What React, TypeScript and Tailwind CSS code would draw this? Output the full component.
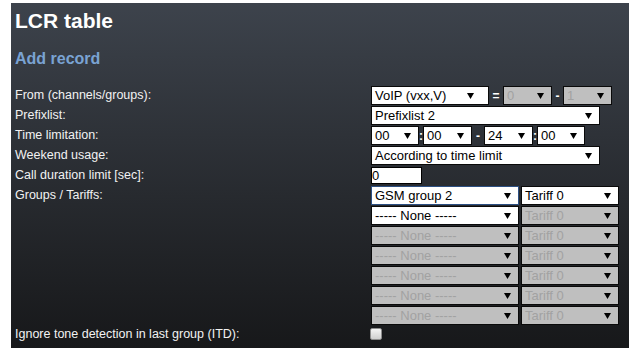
import React from "react";

const Arrow = () => (
  <svg width="7" height="6" viewBox="0 0 7 6" className="shrink-0">
    <polygon points="0,0 7,0 3.5,6" fill="#000" />
  </svg>
);

type SelProps = {
  text: string;
  w: string;
  disabled?: boolean;
  focus?: boolean;
  pr?: string;
};

const Sel = ({ text, w, disabled, focus, pr }: SelProps) => (
  <div
    className={`${w} h-[19px] shrink-0 flex items-center justify-between pl-[3px] ${pr ?? "pr-[7px]"} border ${
      focus ? "border-[#2c4f82]" : "border-[#0a0a0a]"
    } ${disabled ? "bg-[#bfbfbf] text-[#a2a2a2]" : "bg-white text-black"} text-[13px] leading-none whitespace-nowrap overflow-hidden`}
  >
    <span>{text}</span>
    <Arrow />
  </div>
);

const Sep = ({ ch, w }: { ch: string; w: string }) => (
  <div className={`${w} h-[19px] shrink-0 flex items-center justify-center text-white text-[12px] font-bold leading-none`}>
    {ch}
  </div>
);

const Row = ({ label, children, h = "h-[20px]" }: { label?: string; children?: React.ReactNode; h?: string }) => (
  <div className={`flex ${h}`}>
    <div className="w-[356px] shrink-0 h-[19px] flex items-center text-[12.5px] text-[#f2f2f2] leading-none whitespace-nowrap">
      {label}
    </div>
    <div className="flex items-start">{children}</div>
  </div>
);

export default function App() {
  const groupRows = Array.from({ length: 5 });
  return (
    <div className="w-[637px] h-[348px] bg-white pt-[3px] pl-[11px]" style={{ fontFamily: '"Liberation Sans", Arial, sans-serif' }}>
      <div className="w-[618px] h-[345px] bg-gradient-to-b from-[#3d434c] to-[#17181a] pl-[4px] pt-[6px]">
        <h1 className="text-[21px] font-bold text-white leading-[24px]">LCR table</h1>
        <h2 className="mt-[16px] text-[16px] font-bold text-[#7aa3d3] leading-[20px]">Add record</h2>
        <div className="mt-[17px] flex flex-col">
          <Row label="From (channels/groups):">
            <Sel text="VoIP (vxx,V)" w="w-[118px]" pr="pr-[14px]" />
            <Sep ch="=" w="w-[14px]" />
            <Sel text="0" w="w-[49px]" disabled />
            <Sep ch="-" w="w-[11px]" />
            <Sel text="1" w="w-[49px]" disabled />
          </Row>
          <Row label="Prefixlist:">
            <Sel text="Prefixlist 2" w="w-[229px]" />
          </Row>
          <Row label="Time limitation:">
            <Sel text="00" w="w-[48px]" />
            <Sep ch=":" w="w-[4px]" />
            <Sel text="00" w="w-[49px]" />
            <Sep ch="-" w="w-[12px]" />
            <Sel text="24" w="w-[49px]" />
            <Sep ch=":" w="w-[4px]" />
            <Sel text="00" w="w-[48px]" />
          </Row>
          <Row label="Weekend usage:">
            <Sel text="According to time limit" w="w-[229px]" />
          </Row>
          <Row label="Call duration limit [sec]:">
            <div className="mt-[1px] w-[51px] h-[17px] bg-white border border-black text-[13px] leading-none flex items-center pl-[0px] text-black">
              0
            </div>
          </Row>
          <Row label="Groups / Tariffs:">
            <Sel text="GSM group 2" w="w-[148px]" focus />
            <div className="w-[2px]" />
            <Sel text="Tariff 0" w="w-[98px]" />
          </Row>
          <Row>
            <Sel text="----- None -----" w="w-[148px]" />
            <div className="w-[2px]" />
            <Sel text="Tariff 0" w="w-[98px]" disabled />
          </Row>
          {groupRows.map((_, i) => (
            <Row key={i}>
              <Sel text="----- None -----" w="w-[148px]" disabled />
              <div className="w-[2px]" />
              <Sel text="Tariff 0" w="w-[98px]" disabled />
            </Row>
          ))}
          <div className="-mt-[1px]">
            <Row label="Ignore tone detection in last group (ITD):">
              <div className="mt-[3px] -ml-[1px] w-[12px] h-[12px] rounded-[2px] border border-[#8d8d8d] bg-gradient-to-b from-[#f4f4f4] to-[#cfcfcf]" />
            </Row>
          </div>
        </div>
      </div>
    </div>
  );
}
